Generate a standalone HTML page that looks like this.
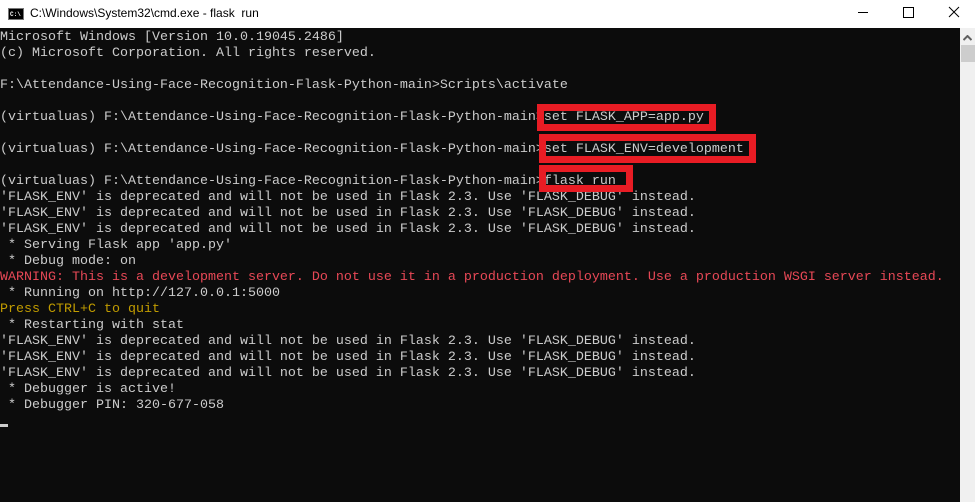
<!DOCTYPE html>
<html><head><style>
*{margin:0;padding:0;box-sizing:border-box}
body{width:975px;height:502px;overflow:hidden;background:#0c0c0c;position:relative;font-family:"Liberation Mono",monospace}
#tb{position:absolute;left:0;top:0;width:975px;height:28px;background:#fff}
#tt{position:absolute;left:30px;top:6px;font:12px "Liberation Sans",sans-serif;color:#000;white-space:pre}
#ico{position:absolute;left:8px;top:8px;width:16px;height:12px;background:#000;border:1px solid #777}
#ico span{position:absolute;left:1px;top:2px;font:bold 6px "Liberation Mono",monospace;color:#fff}
#con{position:absolute;left:0;top:30px;font-size:13.33px;line-height:16px;color:#cccccc;white-space:pre}
.r{color:#e74856}.y{color:#c19c00}
.box{position:absolute;border:7px solid #e81c24}
#sb{position:absolute;left:960px;top:28px;width:15px;height:474px;background:#f0f0f0}
#th{position:absolute;left:961px;top:45px;width:14px;height:17px;background:#cdcdcd}
#cur{position:absolute;left:0;top:424px;width:8px;height:3px;background:#ccc}
</style></head><body>
<div id="tb">
<div id="ico"><span>C:\</span></div>
<div id="tt">C:\Windows\System32\cmd.exe - flask  run</div>
<svg style="position:absolute;left:855px;top:6px" width="14" height="14"><line x1="3" y1="6.5" x2="13" y2="6.5" stroke="#000"/></svg>
<svg style="position:absolute;left:902px;top:6px" width="14" height="14"><rect x="1.5" y="1.5" width="10" height="10" fill="none" stroke="#000"/></svg>
<svg style="position:absolute;left:948px;top:6px" width="14" height="14"><path d="M1 1L11 11M11 1L1 11" stroke="#000"/></svg>
</div>
<div id="con">Microsoft Windows [Version 10.0.19045.2486]
(c) Microsoft Corporation. All rights reserved.

F:\Attendance-Using-Face-Recognition-Flask-Python-main&gt;Scripts\activate

(virtualuas) F:\Attendance-Using-Face-Recognition-Flask-Python-main&gt;set FLASK_APP=app.py

(virtualuas) F:\Attendance-Using-Face-Recognition-Flask-Python-main&gt;set FLASK_ENV=development

(virtualuas) F:\Attendance-Using-Face-Recognition-Flask-Python-main&gt;flask run
'FLASK_ENV' is deprecated and will not be used in Flask 2.3. Use 'FLASK_DEBUG' instead.
'FLASK_ENV' is deprecated and will not be used in Flask 2.3. Use 'FLASK_DEBUG' instead.
'FLASK_ENV' is deprecated and will not be used in Flask 2.3. Use 'FLASK_DEBUG' instead.
 * Serving Flask app 'app.py'
 * Debug mode: on
<span class="r">WARNING: This is a development server. Do not use it in a production deployment. Use a production WSGI server instead.</span>
 * Running on http://127.0.0.1:5000
<span class="y">Press CTRL+C to quit</span>
 * Restarting with stat
'FLASK_ENV' is deprecated and will not be used in Flask 2.3. Use 'FLASK_DEBUG' instead.
'FLASK_ENV' is deprecated and will not be used in Flask 2.3. Use 'FLASK_DEBUG' instead.
'FLASK_ENV' is deprecated and will not be used in Flask 2.3. Use 'FLASK_DEBUG' instead.
 * Debugger is active!
 * Debugger PIN: 320-677-058</div>
<div class="box" style="left:537px;top:104px;width:179px;height:27px"></div>
<div class="box" style="left:539px;top:134px;width:217px;height:29px"></div>
<div class="box" style="left:539px;top:165px;width:94px;height:27px"></div>
<div id="cur"></div>
<div id="sb"><svg style="position:absolute;left:3px;top:7px" width="9" height="6"><path d="M0.5 5L4.5 1L8.5 5" stroke="#606060" stroke-width="2" fill="none"/></svg></div>
<div id="th"></div>
</body></html>
